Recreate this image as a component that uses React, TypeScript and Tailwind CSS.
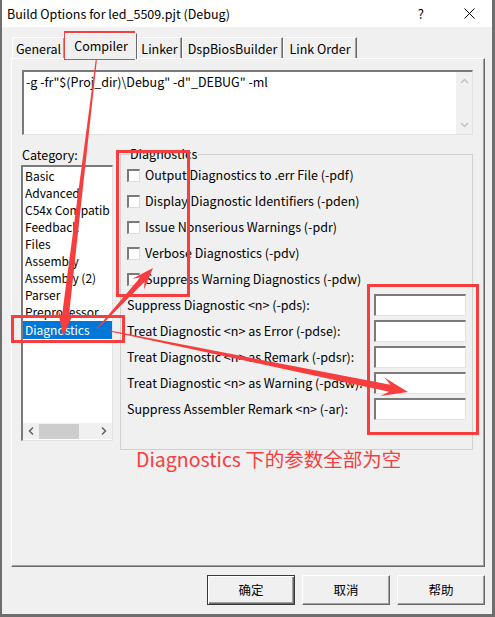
import React from 'react';

const categories = [
  'Basic',
  'Advanced',
  'C54x Compatib',
  'Feedback',
  'Files',
  'Assembly',
  'Assembly (2)',
  'Parser',
  'Preprocessor',
  'Diagnostics',
];

const checks = [
  'Output Diagnostics to .err File (-pdf)',
  'Display Diagnostic Identifiers (-pden)',
  'Issue Nonserious Warnings (-pdr)',
  'Verbose Diagnostics (-pdv)',
  'Suppress Warning Diagnostics (-pdw)',
];

const fields = [
  'Suppress Diagnostic <n> (-pds):',
  'Treat Diagnostic <n> as Error (-pdse):',
  'Treat Diagnostic <n> as Remark (-pdsr):',
  'Treat Diagnostic <n> as Warning (-pdsw):',
  'Suppress Assembler Remark <n> (-ar):',
];

const tabs = [
  { label: 'General', w: 'w-[53px]' },
  { label: 'Compiler', w: 'w-[72px]', active: true },
  { label: 'Linker', w: 'w-[45px]' },
  { label: 'DspBiosBuilder', w: 'w-[101px]' },
  { label: 'Link Order', w: 'w-[74px]' },
];

function arrow(x1: number, y1: number, x2: number, y2: number, w0: number, w1: number, hl: number, hw: number) {
  const dx = x2 - x1;
  const dy = y2 - y1;
  const len = Math.hypot(dx, dy);
  const ux = dx / len;
  const uy = dy / len;
  const nx = -uy;
  const ny = ux;
  const bx = x2 - ux * hl;
  const by = y2 - uy * hl;
  const kx = x2 - ux * hl * 0.72;
  const ky = y2 - uy * hl * 0.72;
  const p = [
    [x1 + (nx * w0) / 2, y1 + (ny * w0) / 2],
    [kx + (nx * w1) / 2, ky + (ny * w1) / 2],
    [bx + (nx * hw) / 2, by + (ny * hw) / 2],
    [x2, y2],
    [bx - (nx * hw) / 2, by - (ny * hw) / 2],
    [kx - (nx * w1) / 2, ky - (ny * w1) / 2],
    [x1 - (nx * w0) / 2, y1 - (ny * w0) / 2],
  ];
  return p.map(([x, y]) => `${x.toFixed(1)},${y.toFixed(1)}`).join(' ');
}

function Sunken({ className = '', children }: { className?: string; children?: React.ReactNode }) {
  return (
    <div
      className={`border-t-2 border-l-2 border-r border-b border-t-[#7a7a7a] border-l-[#7a7a7a] border-r-[#e3e3e3] border-b-[#e3e3e3] bg-white ${className}`}
    >
      {children}
    </div>
  );
}

function Checkbox() {
  return (
    <span className="w-[13px] h-[13px] shrink-0 bg-white border-t-2 border-l-2 border-r border-b border-t-[#7a7a7a] border-l-[#7a7a7a] border-r-[#dcdcdc] border-b-[#dcdcdc]" />
  );
}

function Button({ label, primary }: { label: string; primary?: boolean }) {
  return primary ? (
    <button className="w-[88px] h-[30px] border border-[#3a3a3a] bg-[#f0f0f0] shadow-[inset_1px_1px_0_#ffffff,inset_-1px_-1px_0_#696969,inset_-2px_-2px_0_#a0a0a0] text-[12.5px] text-black">
      {label}
    </button>
  ) : (
    <button className="w-[88px] h-[30px] border border-t-white border-l-white border-r-[#696969] border-b-[#696969] bg-[#f0f0f0] shadow-[inset_-1px_-1px_0_#a0a0a0] text-[12.5px] text-black">
      {label}
    </button>
  );
}

function Annotations() {
  const red = '#f73d3d';
  return (
    <svg className="absolute inset-0 pointer-events-none" width="495" height="617" viewBox="0 0 495 617">
      <g fill="none" stroke={red} strokeWidth="3">
        <rect x="65.5" y="32.5" width="68" height="26" />
        <rect x="117.5" y="151.5" width="71" height="144" />
        <rect x="12.5" y="316.5" width="111" height="25" />
        <rect x="368.5" y="285.5" width="109" height="148" />
      </g>
      <g fill={red}>
        <polygon points={arrow(97, 54, 63, 336, 1, 7, 26, 17)} />
        <polygon points={arrow(97, 329, 153, 268, 1, 6, 22, 16)} />
        <polygon points={arrow(110, 331, 408, 392, 1, 7, 26, 19)} />
      </g>
    </svg>
  );
}

export default function App() {
  return (
    <div className="relative w-[495px] h-[617px] overflow-hidden font-['Noto_Sans_CJK_SC',sans-serif] text-[12.5px] text-black">
      <div className="w-full h-full flex flex-col bg-[#f0f0f0] border-l-2 border-r-[3px] border-b-[3px] border-[#6e6e6e]">
        {/* title bar */}
        <div className="h-[27px] shrink-0 bg-white flex items-center pl-[5px]">
          <span className="leading-[16px]">Build Options for led_5509.pjt (Debug)</span>
          <span className="ml-auto mr-[40px] text-[13px] leading-[16px]">?</span>
          <svg width="11" height="11" viewBox="0 0 11 11" className="mr-[17px]">
            <path d="M0.5 0.5 L10.5 10.5 M10.5 0.5 L0.5 10.5" stroke="#000" strokeWidth="1" />
          </svg>
        </div>

        {/* tabs */}
        <div className="mt-[6px] ml-[10px] h-[25px] flex items-end">
          {tabs.map((t) =>
            t.active ? (
              <div
                key={t.label}
                className={`${t.w} h-[26px] -mb-px relative z-10 bg-[#f0f0f0] border-t border-l border-t-white border-l-white border-r border-r-[#696969] flex justify-center pt-[4px] leading-[16px]`}
              >
                {t.label}
              </div>
            ) : (
              <div
                key={t.label}
                className={`${t.w} h-[21px] bg-[#f0f0f0] border-t border-l border-t-white border-l-white border-r border-r-[#696969] shadow-[inset_-1px_0_0_#a0a0a0] flex justify-center pt-[3px] leading-[16px]`}
              >
                {t.label}
              </div>
            )
          )}
        </div>

        {/* panel */}
        <div className="ml-[9px] w-[474px] h-[509px] border border-t-white border-l-white border-r-[#696969] border-b-[#696969] shadow-[inset_-1px_-1px_0_#a0a0a0] pl-[10px] pt-[11px]">
          <Sunken className="w-[451px] h-[65px] flex">
            <div className="flex-1 pl-[2px] pt-[2px] leading-[16px] whitespace-nowrap">
              -g -fr"$(Proj_dir)\Debug" -d"_DEBUG" -ml
            </div>
            <div className="w-[16px] h-full flex flex-col items-center justify-between py-[6px] bg-[#f0f0f0]">
              <svg width="9" height="6" viewBox="0 0 9 6">
                <path d="M1 5 L4.5 1.5 L8 5" fill="none" stroke="#c2c2c2" strokeWidth="1.5" />
              </svg>
              <svg width="9" height="6" viewBox="0 0 9 6">
                <path d="M1 1 L4.5 4.5 L8 1" fill="none" stroke="#c2c2c2" strokeWidth="1.5" />
              </svg>
            </div>
          </Sunken>

          <div className="flex">
            {/* category */}
            <div className="-ml-px w-[92px]">
              <div className="mt-[12px] leading-[16px] pl-px">Category:</div>
              <Sunken className="mt-[2px] h-[276px] flex flex-col">
                <div className="flex-1 overflow-hidden text-[12px]">
                  {categories.map((c) => (
                    <div
                      key={c}
                      className={`h-[17px] leading-[17px] pl-[2px] whitespace-nowrap overflow-hidden ${
                        c === 'Diagnostics' ? 'bg-[#0078d7] text-white mt-[1px] h-[18px] leading-[18px]' : ''
                      }`}
                    >
                      {c}
                    </div>
                  ))}
                </div>
                <div className="h-[16px] mb-px flex items-center bg-[#f0f0f0]">
                  <svg width="16" height="16" viewBox="0 0 16 16">
                    <path d="M10 4.5 L6.5 8 L10 11.5" fill="none" stroke="#606060" strokeWidth="1.5" />
                  </svg>
                  <div className="w-[40px] h-[15px] bg-[#cdcdcd]" />
                  <div className="flex-1" />
                  <svg width="16" height="16" viewBox="0 0 16 16">
                    <path d="M6 4.5 L9.5 8 L6 11.5" fill="none" stroke="#606060" strokeWidth="1.5" />
                  </svg>
                </div>
              </Sunken>
            </div>

            {/* diagnostics group */}
            <fieldset className="ml-[7px] mt-[11px] w-[353px] h-[304px] border border-[#d0d0d0]">
              <legend className="ml-[8px] px-px leading-[16px]">Diagnostics</legend>
              {checks.map((c) => (
                <div key={c} className="h-[26px] flex items-center pl-[6px] gap-[5px]">
                  <Checkbox />
                  <span className="leading-[16px] whitespace-nowrap">{c}</span>
                </div>
              ))}
              {fields.map((f) => (
                <div key={f} className="h-[26px] flex items-center justify-between pl-[6px] pr-[6px]">
                  <span className="leading-[16px] whitespace-nowrap">{f}</span>
                  <Sunken className="w-[92px] h-[22px] shrink-0" />
                </div>
              ))}
            </fieldset>
          </div>

          <div className="-mt-[3px] ml-[114px] text-[19.5px] leading-[24px] text-[#f73d3d] whitespace-nowrap">
            Diagnostics 下的参数全部为空
          </div>
        </div>

        {/* buttons */}
        <div className="mt-[8px] pr-[7px] flex justify-end gap-[7px]">
          <Button label="确定" primary />
          <Button label="取消" />
          <Button label="帮助" />
        </div>
      </div>
      <Annotations />
    </div>
  );
}
